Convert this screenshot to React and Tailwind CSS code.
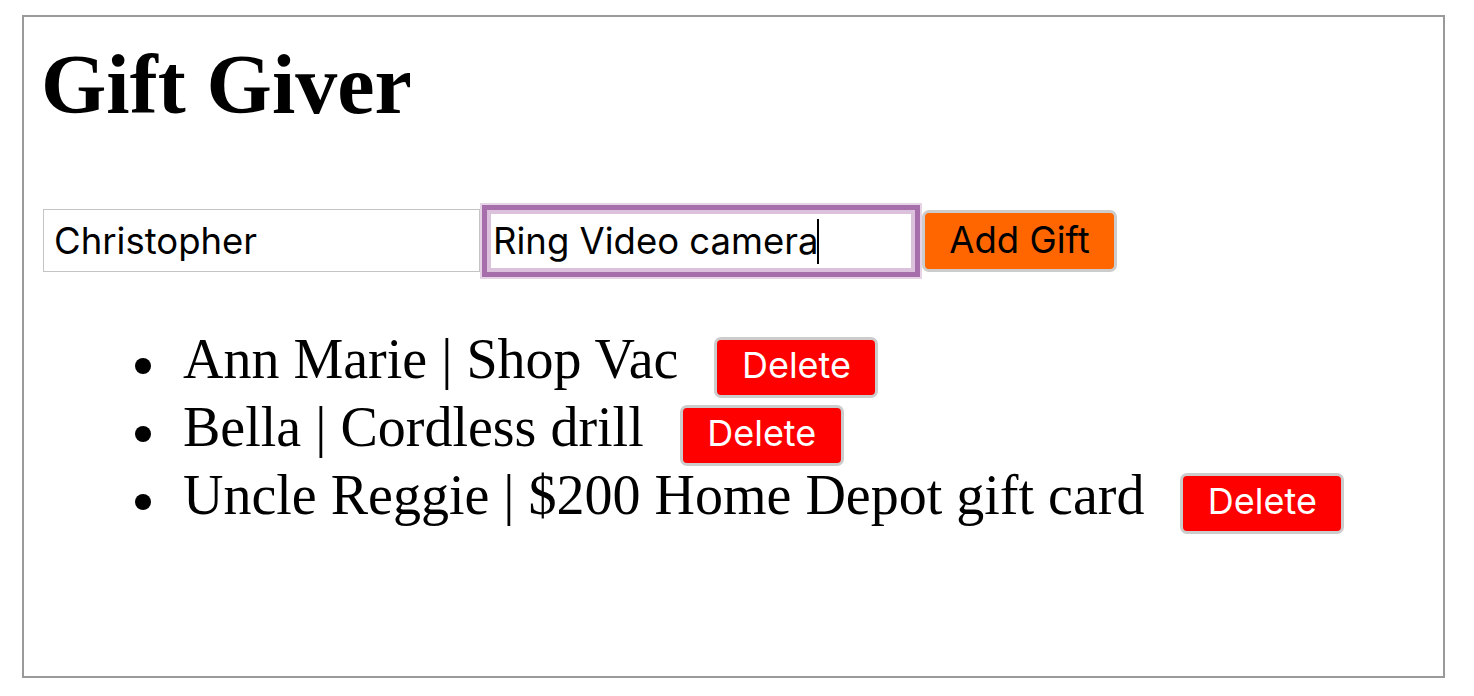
import { useState } from "react";

const serif = { fontFamily: '"Liberation Serif", "Times New Roman", serif' };
const sans = { fontFamily: 'Inter, "Noto Sans", Arial, sans-serif' };

const initialGifts = [
  { id: 1, name: "Ann Marie", gift: "Shop Vac" },
  { id: 2, name: "Bella", gift: "Cordless drill" },
  { id: 3, name: "Uncle Reggie", gift: "$200 Home Depot gift card" },
];

export default function App() {
  const [gifts, setGifts] = useState(initialGifts);
  const [name, setName] = useState("Christopher");
  const [gift, setGift] = useState("Ring Video camera");

  const addGift = () => {
    if (!name || !gift) return;
    setGifts([...gifts, { id: Date.now(), name, gift }]);
    setName("");
    setGift("");
  };

  const removeGift = (id) => setGifts(gifts.filter((g) => g.id !== id));

  return (
    <div className="bg-white min-h-screen pt-[15px] pl-[22px]">
      <div className="w-[1423px] h-[663px] border-2 border-[#9a9a9a] pl-[19px] box-border">
        {/* Title */}
        <h1 className="text-[84px] leading-[84px] font-bold text-black mt-[26px] -ml-[2px]" style={serif}>
          Gift Giver
        </h1>

        {/* Form */}
        <div className="flex items-center mt-[82px] h-[63px]" style={sans}>
          <input
            value={name}
            onChange={(e) => setName(e.target.value)}
            className="w-[437px] h-[63px] box-border border border-[#c4c4c4] pl-[10px] text-[36.5px] text-black outline-none bg-white"
          />
          <div className="relative ml-[7px] flex">
            <input
              value={gift}
              onChange={(e) => setGift(e.target.value)}
              className="w-[428px] h-[62px] box-border border-4 border-[#dcc1dc] pl-[2px] text-[36.5px] text-black bg-white outline-[5px] outline-solid outline-[#a66fab] shadow-[0_0_0_7px_#e6d3e6]"
            />
            <span className="absolute left-[330px] top-[9px] w-[2px] h-[45px] bg-black" />
          </div>
          <button
            onClick={addGift}
            className="ml-[7px] w-[195px] h-[62px] box-border border-[3px] border-[#cccccc] rounded-[7px] bg-[#ff6600] text-black text-[36.5px]"
          >
            Add Gift
          </button>
        </div>

        {/* List */}
        <ul className="mt-[53px] pl-[92px]">
          {gifts.map((g) => (
            <li key={g.id} className="flex items-baseline h-[68px]">
              <span className="self-start mt-[33px] w-4 h-4 rounded-full bg-black shrink-0" />
              <span className="ml-[32px] text-[56px] leading-[68px] text-black whitespace-nowrap" style={serif}>
                {g.name} | {g.gift}
              </span>
              <button
                onClick={() => removeGift(g.id)}
                className="ml-[36px] w-[164px] h-[61px] box-border border-[3px] border-[#cccccc] rounded-[7px] bg-[#ff0000] text-white text-[36px] leading-[51px] pb-[4px]"
                style={sans}
              >
                Delete
              </button>
            </li>
          ))}
        </ul>
      </div>
    </div>
  );
}
